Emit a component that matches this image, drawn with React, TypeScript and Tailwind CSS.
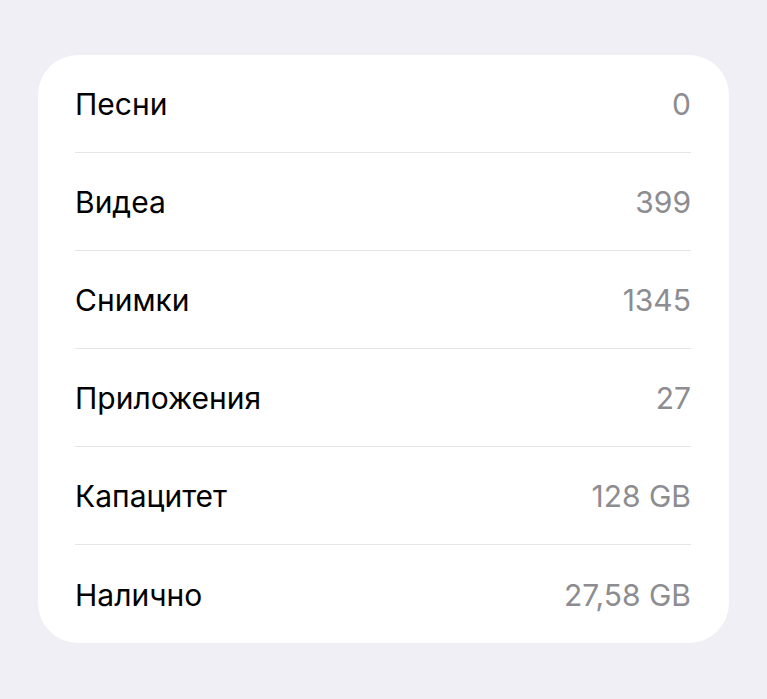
import React from 'react';

interface Row {
  label: string;
  value: string;
}

const ROWS: Row[] = [
  { label: 'Песни', value: '0' },
  { label: 'Видеа', value: '399' },
  { label: 'Снимки', value: '1345' },
  { label: 'Приложения', value: '27' },
  { label: 'Капацитет', value: '128 GB' },
  { label: 'Налично', value: '27,58 GB' },
];

const App: React.FC = () => {
  return (
    <div
      lang="bg"
      className="min-h-[699px] w-full bg-[#f0eff5] pt-[55px] px-[38px] font-['Inter','Noto_Sans',sans-serif]"
    >
      <div className="bg-white rounded-[40px] pl-[37px] pr-[38px]">
        {ROWS.map((row, i) => (
          <div
            key={row.label}
            className={`flex items-center justify-between h-[98px] pt-[2px] ${i < ROWS.length - 1 ? 'border-b border-[#e3e3e8]' : ''}`}
          >
            <span className="text-[30px] text-black tracking-[0px]">{row.label}</span>
            <span className="text-[30px] text-[#8c8c91] tracking-[0px]">{row.value}</span>
          </div>
        ))}
      </div>
    </div>
  );
};

export default App;
